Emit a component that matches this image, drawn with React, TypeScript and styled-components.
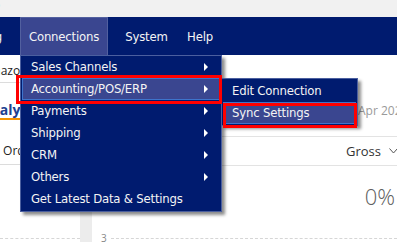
import React from "react";
import styled, { createGlobalStyle } from "styled-components";

const Global = createGlobalStyle`
  html, body { margin: 0; padding: 0; background: #ffffff; }
  body {
    width: 397px;
    height: 242px;
    overflow: hidden;
    font-family: "DejaVu Sans Condensed", "DejaVu Sans", sans-serif;
  }
`;

const NAVY = "#001b6f";
const HILITE = "#3a4690";

const Page = styled.div`
  width: 397px;
  height: 242px;
  overflow: hidden;
  display: flex;
  flex-direction: column;
`;

const TopStrip = styled.div`
  height: 17px;
  flex: none;
  background: #f1f1f1;
  color: #333;
  font-size: 13px;
  line-height: 12px;
  white-space: nowrap;
  overflow: hidden;
`;

const TopText = styled.span`
  display: inline-block;
  margin-left: -4px;
`;

const NavBar = styled.nav`
  height: 38px;
  flex: none;
  background: ${NAVY};
  display: flex;
  align-items: stretch;
  position: relative;
  z-index: 5;
  letter-spacing: -0.2px;
`;

const NavItem = styled.div<{ $w: number; $active?: boolean; $offset?: number }>`
  position: relative;
  box-sizing: border-box;
  width: ${(p) => p.$w}px;
  flex: none;
  margin-left: ${(p) => p.$offset ?? 0}px;
  display: flex;
  align-items: center;
  justify-content: center;
  color: #f4f4f4;
  font-size: 13px;
  white-space: nowrap;
  background: ${(p) => (p.$active ? HILITE : "transparent")};
  border: 1px solid ${(p) => (p.$active ? "#52609f" : "transparent")};
  border-bottom: none;
`;

const ClipLabel = styled.span`
  margin-left: auto;
  padding-right: 9px;
`;

const Menu = styled.div<{ $w: number }>`
  position: absolute;
  box-sizing: border-box;
  background: ${NAVY};
  border: 1px solid #4b5f9f;
  width: ${(p) => p.$w}px;
  padding: 0 0 1px;
  box-shadow: 3px 3px 3px rgba(0, 0, 0, 0.45);
`;

const MainMenu = styled(Menu)`
  top: 100%;
  left: -1px;
`;

const SubMenu = styled(Menu)`
  top: -1px;
  left: calc(100% + 2px);
  padding-top: 1px;
`;

const MenuItem = styled.div<{ $active?: boolean }>`
  position: relative;
  box-sizing: border-box;
  height: 22px;
  margin: 0 1px;
  padding: 0 11px 0 8px;
  display: flex;
  align-items: center;
  font-size: 13px;
  line-height: 14px;
  padding-bottom: 1px;
  color: #f4f4f4;
  white-space: nowrap;
  background: ${(p) => (p.$active ? HILITE : "transparent")};
  border: 1px solid ${(p) => (p.$active ? "#3e74cc" : "transparent")};
`;

const Arrow = styled.span`
  margin-left: auto;
  width: 0;
  height: 0;
  border-left: 4px solid #ffffff;
  border-top: 4px solid transparent;
  border-bottom: 4px solid transparent;
`;

const Flag = styled.span<{ $t: number; $r: number; $b: number; $l: number }>`
  position: absolute;
  top: ${(p) => p.$t}px;
  right: ${(p) => p.$r}px;
  bottom: ${(p) => p.$b}px;
  left: ${(p) => p.$l}px;
  border: 3px solid #ff0000;
  pointer-events: none;
  z-index: 3;
`;

/* ---------- page body under the menu ---------- */

const Body = styled.div`
  flex: 1;
  min-height: 0;
  display: grid;
  grid-template-columns: 80px 12px minmax(0, 1fr);
  font-family: "Open Sans", "Noto Sans", sans-serif;
  color: #222;
  overflow: hidden;
`;

const LeftPanel = styled.div`
  display: flex;
  flex-direction: column;
  overflow: hidden;
  min-width: 0;
`;

const Gutter = styled.div`
  background: #ececec;
`;

const MainPanel = styled.div`
  display: flex;
  flex-direction: column;
  min-width: 0;
  overflow: hidden;
`;

const LeftRow = styled.div<{ $h: number; $line?: boolean; $pt?: number }>`
  height: ${(p) => p.$h}px;
  flex: none;
  box-sizing: border-box;
  padding-top: ${(p) => p.$pt ?? 0}px;
  display: flex;
  align-items: center;
  font-size: 12px;
  white-space: nowrap;
  border-bottom: ${(p) => (p.$line ? "1px solid #dcdcdc" : "none")};
`;

const Clipped = styled.span<{ $shift: number }>`
  margin-left: ${(p) => -p.$shift}px;
`;

const SectionTitle = styled.div`
  height: 37px;
  flex: none;
  box-sizing: border-box;
  padding-top: 17px;
  display: flex;
  align-items: center;
  font-size: 14px;
  font-weight: 700;
  color: #20408f;
  white-space: nowrap;
  border-bottom: 2px solid #f39200;
`;

const Spacer = styled.div<{ $h: number }>`
  height: ${(p) => p.$h}px;
  flex: none;
`;

const DotLine = styled.div`
  margin-top: auto;
  margin-bottom: 3px;
  border-top: 1px dashed #d6d6d6;
`;

const MainRow = styled.div<{ $h: number; $line?: boolean }>`
  height: ${(p) => p.$h}px;
  flex: none;
  box-sizing: border-box;
  display: flex;
  align-items: center;
  justify-content: flex-end;
  border-bottom: ${(p) => (p.$line ? "1px solid #e3e3e3" : "none")};
`;

const DateRow = styled(MainRow)`
  justify-content: flex-start;
  align-items: flex-start;
  padding: 47px 0 0 266px;
  overflow: hidden;
`;

const DateText = styled.span`
  font-size: 12px;
  color: #9a9a9a;
  white-space: nowrap;
`;

const Gross = styled.span`
  font-size: 13px;
  color: #333;
  display: flex;
  align-items: center;
  gap: 8px;
  margin-right: -1px;
`;

const Chevron = styled.svg`
  width: 9px;
  height: 6px;
`;

const Big = styled.span`
  font-size: 22px;
  font-weight: 300;
  color: #606060;
  margin-right: 2px;
`;

const Axis = styled.div`
  margin-top: auto;
  display: flex;
  align-items: center;
  gap: 4px;
  padding-left: 9px;
  margin-bottom: -3px;
  font-size: 10px;
  color: #888;
`;

const AxisLine = styled.div`
  flex: 1;
  border-top: 1px dashed #d6d6d6;
`;

const subItems = ["Edit Connection", "Sync Settings"];
const menuItems: { label: string; sub?: boolean }[] = [
  { label: "Sales Channels", sub: true },
  { label: "Accounting/POS/ERP", sub: true },
  { label: "Payments", sub: true },
  { label: "Shipping", sub: true },
  { label: "CRM", sub: true },
  { label: "Others", sub: true },
  { label: "Get Latest Data & Settings" },
];

export default function App() {
  return (
    <>
      <Global />
      <Page>
        <TopStrip>
          <TopText>)</TopText>
        </TopStrip>
        <NavBar>
          <NavItem $w={72} $offset={-60}>
            <ClipLabel>Reporting</ClipLabel>
          </NavItem>
          <NavItem $w={88} $offset={8} $active>
            Connections
            <MainMenu $w={202}>
              {menuItems.map((m) => {
                const active = m.label === "Accounting/POS/ERP";
                return (
                  <MenuItem key={m.label} $active={active}>
                    {m.label}
                    {m.sub && <Arrow />}
                    {active && (
                      <>
                        <Flag $t={-4} $r={-3} $b={-5} $l={-7} />
                        <SubMenu $w={137}>
                          {subItems.map((s) => (
                            <MenuItem key={s} $active={s === "Sync Settings"}>
                              {s}
                              {s === "Sync Settings" && <Flag $t={0} $r={-2} $b={-5} $l={-1} />}
                            </MenuItem>
                          ))}
                        </SubMenu>
                      </>
                    )}
                  </MenuItem>
                );
              })}
            </MainMenu>
          </NavItem>
          <NavItem $w={61} $offset={8}>
            System
          </NavItem>
          <NavItem $w={42} $offset={2}>
            Help
          </NavItem>
        </NavBar>
        <Body>
          <LeftPanel>
            <LeftRow $h={28} $pt={4} $line>
              <Clipped $shift={18}>Amazon</Clipped>
            </LeftRow>
            <SectionTitle>
              <Clipped $shift={19}>Analytics</Clipped>
            </SectionTitle>
            <Spacer $h={17} />
            <LeftRow $h={28} $line>
              <Clipped $shift={0}>&nbsp;Orders</Clipped>
            </LeftRow>
            <DotLine />
          </LeftPanel>
          <Gutter />
          <MainPanel>
            <DateRow $h={82} $line>
              <DateText>Apr 2024 - Apr 2025</DateText>
            </DateRow>
            <MainRow $h={29} $line>
              <Gross>
                Gross
                <Chevron viewBox="0 0 9 6">
                  <path d="M0.5 0.5 L4.5 5 L8.5 0.5" fill="none" stroke="#555" strokeWidth="1" />
                </Chevron>
              </Gross>
            </MainRow>
            <MainRow $h={60}>
              <Big>0%</Big>
            </MainRow>
            <Axis>
              3
              <AxisLine />
            </Axis>
          </MainPanel>
        </Body>
      </Page>
    </>
  );
}
